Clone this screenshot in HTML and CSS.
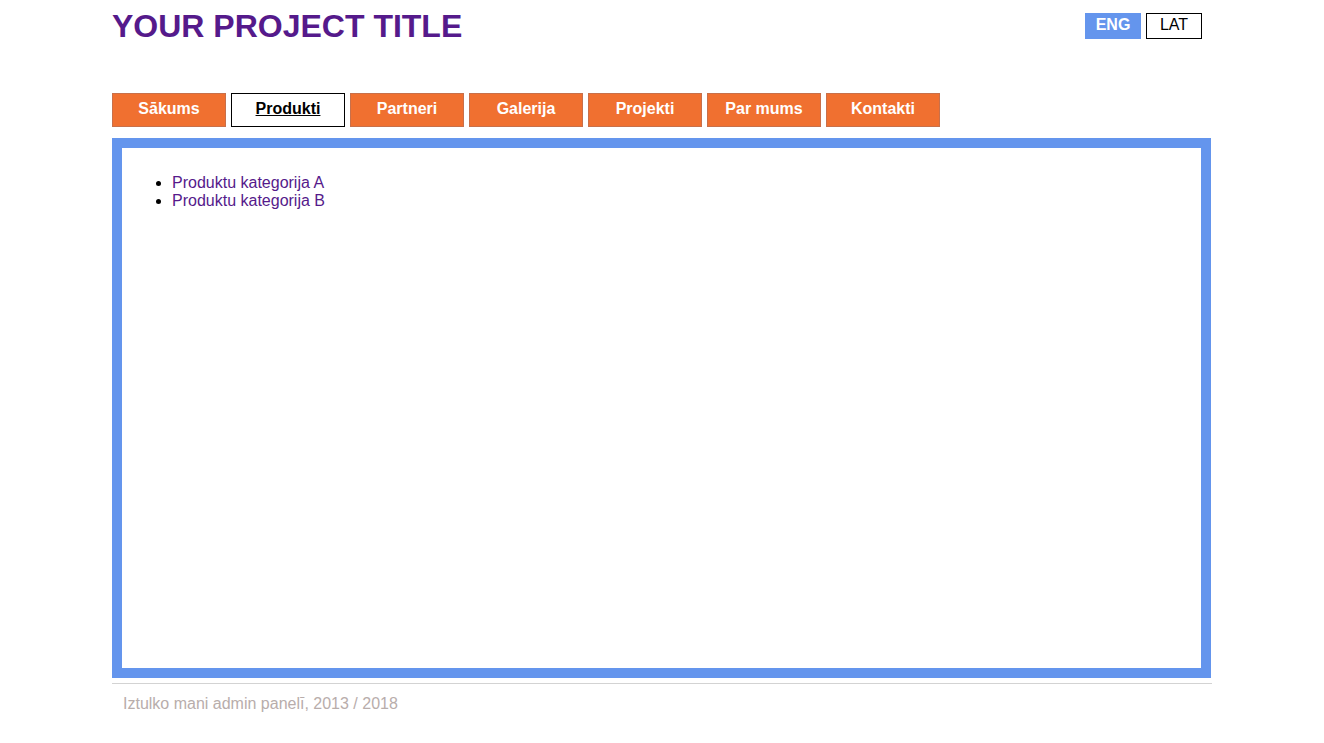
FILE: index.html
```html
<!DOCTYPE html>
<html lang="lv">
<head>
<meta charset="utf-8">
<title>Your Project Title</title>
<link rel="stylesheet" href="styles.css">
</head>
<body>
<div class="page">
  <header class="header">
    <h1 class="title"><a href="#">YOUR PROJECT TITLE</a></h1>
    <div class="langs">
      <a class="lang lang-active" href="#">ENG</a>
      <a class="lang" href="#">LAT</a>
    </div>
  </header>
  <nav class="nav">
    <a class="nav-item" href="#">Sākums</a>
    <a class="nav-item nav-active" href="#">Produkti</a>
    <a class="nav-item" href="#">Partneri</a>
    <a class="nav-item" href="#">Galerija</a>
    <a class="nav-item" href="#">Projekti</a>
    <a class="nav-item" href="#">Par mums</a>
    <a class="nav-item" href="#">Kontakti</a>
  </nav>
  <main class="content">
    <ul class="cat-list">
      <li><a href="#">Produktu kategorija A</a></li>
      <li><a href="#">Produktu kategorija B</a></li>
    </ul>
  </main>
  <footer class="footer">Iztulko mani admin panelī, 2013 / 2018</footer>
</div>
</body>
</html>
```
FILE: styles.css
```css
html, body {
  margin: 0;
  padding: 0;
  background: #ffffff;
}
body {
  font-family: "Liberation Sans", Arial, sans-serif;
  font-size: 16px;
  color: #000;
}
.page {
  width: 1100px;
  margin: 0 auto;
}
.header {
  display: flex;
  justify-content: space-between;
  align-items: flex-start;
  height: 93px;
}
.title {
  margin: 0;
  padding-top: 8px;
  font-size: 32px;
  font-weight: bold;
  line-height: 37px;
}
.title a {
  color: #551a8b;
  text-decoration: none;
}
.langs {
  display: flex;
  gap: 5px;
  margin-top: 13px;
  margin-right: 10px;
}
.lang {
  box-sizing: border-box;
  width: 56px;
  height: 26px;
  line-height: 22px;
  text-align: center;
  border: 1px solid #000;
  color: #000;
  text-decoration: none;
}
.lang-active {
  background: #6495ed;
  border-color: #6495ed;
  color: #fff;
  font-weight: bold;
}
.nav {
  display: flex;
  gap: 5px;
}
.nav-item {
  box-sizing: border-box;
  width: 114px;
  height: 34px;
  line-height: 30px;
  text-align: center;
  background: #f07030;
  border: 1px solid #c8704a;
  color: #fff;
  font-weight: bold;
  text-decoration: none;
}
.nav-active {
  background: #fff;
  border-color: #000;
  color: #000;
  text-decoration: underline;
}
.content {
  box-sizing: border-box;
  margin: 11px 1px 0 0;
  height: 540px;
  border: 10px solid #6495ed;
  padding: 26px 10px 10px;
}
.cat-list {
  margin: 0;
  padding-left: 40px;
  line-height: 18px;
}
.cat-list a {
  color: #551a8b;
  text-decoration: none;
}
.footer {
  margin-top: 5px;
  border-top: 1px solid #d3d3d3;
  padding: 11px 11px 10px;
  color: #b8adab;
  line-height: 18px;
}
```
